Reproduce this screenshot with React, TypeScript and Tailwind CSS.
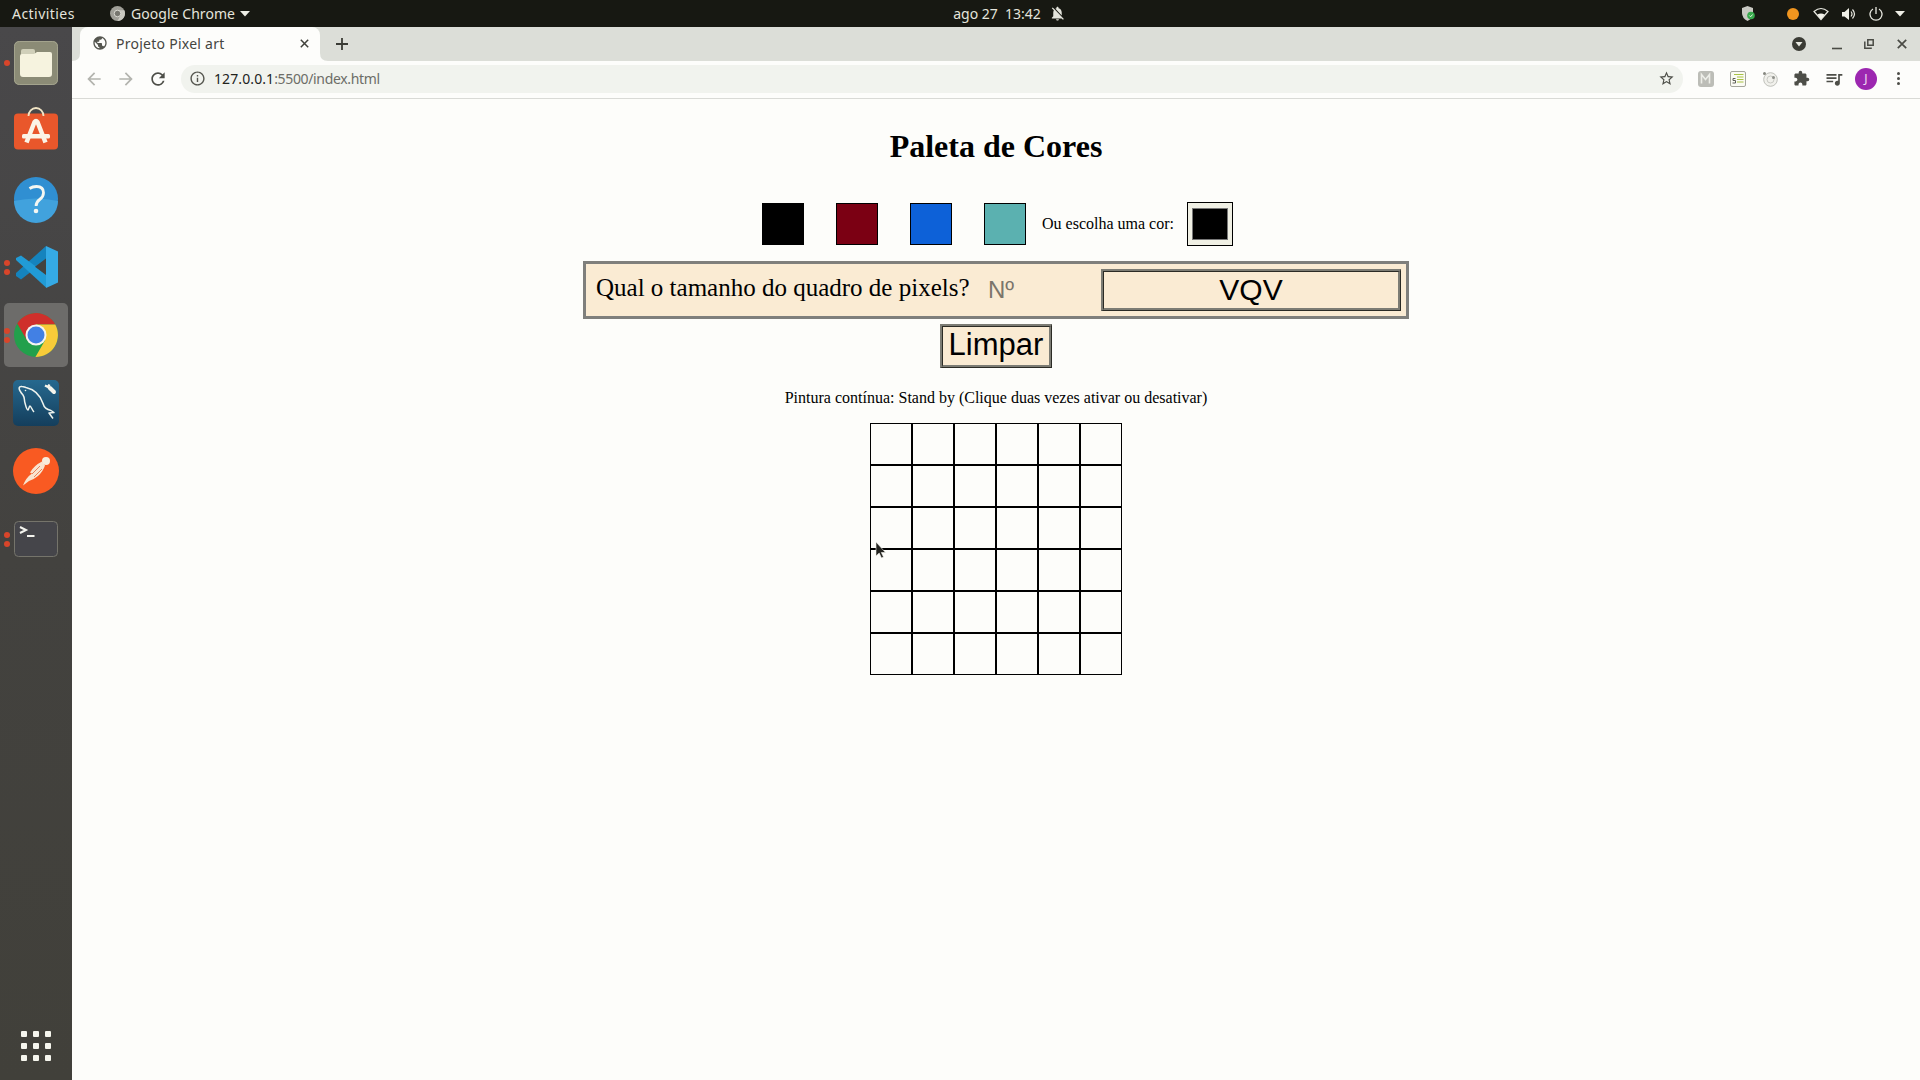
import React from "react";
import { MdExtension, MdQueueMusic, MdStarBorder, MdRefresh, MdArrowBack, MdArrowForward, MdInfoOutline, MdPublic, MdNotificationsOff } from "react-icons/md";

function Dots({ n }: { n: number }) {
  return (
    <span className="flex w-[14px] shrink-0 flex-col items-center gap-[3px]">
      {Array.from({ length: n }, (_, i) => (
        <span key={i} className="size-[6px] rounded-full bg-[#d8452a]" />
      ))}
    </span>
  );
}

function DockItem({ dots = 0, active = false, children }: { dots?: number; active?: boolean; children: React.ReactNode }) {
  return (
    <div className={active ? "flex h-16 w-[72px] items-center px-1 [&>div]:bg-[#6d6c6a]" : "flex h-16 w-[72px] items-center px-1"}>
      <div className="flex h-16 w-16 items-center rounded-[5px]">
        <span className="-ml-[4px] flex w-[14px]">{dots > 0 && <Dots n={dots} />}</span>
        <span className="flex">{children}</span>
      </div>
    </div>
  );
}

const svg = { width: 44, height: 44, viewBox: "0 0 44 44", overflow: "visible" } as const;

function FilesIcon() {
  return (
    <svg {...svg}>
      <rect x="0" y="0" width="44" height="44" rx="5" fill="#8b8b76" />
      <rect x="0.5" y="0.5" width="43" height="43" rx="5" fill="none" stroke="#a3a38d" />
      <path d="M7 12V10q0-2 2-2h10q2 0 2 2v4H7z" fill="#d0cfb9" />
      <path d="M6 15q0-2 2-2h12l3-2h13q2 0 2 2v20q0 3-3 3H9q-3 0-3-3z" fill="#f6f3df" />
    </svg>
  );
}

function SoftwareIcon() {
  return (
    <svg {...svg}>
      <rect x="0" y="4.500" width="44" height="36" rx="4" fill="#e9572b" />
      <path d="M14.500 7a7.500 8 0 0 1 15 0" fill="none" stroke="#f1e4c4" strokeWidth="1.800" />
      <path d="M12.500 33.500L20.500 13q1.500-2 3 0l8 20.500" fill="none" stroke="#fbf4e6" strokeWidth="4.500" />
      <rect x="8" y="25" width="28" height="4.500" rx="1.500" fill="#fbf4e6" />
    </svg>
  );
}

function HelpIcon() {
  return (
    <svg {...svg}>
      <circle cx="22" cy="22" r="22" fill="#308fd2" />
      <path d="M0 24a22 22 0 0 0 44 0q-22-5-44 0z" fill="#41a2dd" />
      <path d="M15.5 11.5q3-2 7-2 7 0 7 6.2 0 4-3.8 6.8-3.6 2.6-3.6 6.5" fill="none" stroke="#f5f7f2" strokeWidth="2.8" />
      <circle cx="22" cy="34" r="2.3" fill="#f5f7f2" />
    </svg>
  );
}

function CodeIcon() {
  return (
    <svg {...svg}>
      <path d="M2 28L32 1v14L7 34.500L2 31z" fill="#1583bd" />
      <path d="M7 10.500L32 29v13.500L2 15v-2z" fill="#219bd6" />
      <path d="M32 1l12 5.500v31L32 43z" fill="#35aae5" />
      <path d="M32 13.500V30L21 21.800z" fill="#43423f" />
    </svg>
  );
}

function ChromeIcon() {
  return (
    <svg width="44" height="44" viewBox="2 2 44 44">
      <circle cx="24" cy="24" r="22" fill="#22a04c" />
      <path d="M5.250 12.530A22 22 0 0 1 43.300 13.500H24L14.900 29.250z" fill="#cf2f2b" />
      <path d="M43.300 13.500A22 22 0 0 1 23.440 45.970L33.100 29.250 24 13.500z" fill="#f8cb39" />
      <circle cx="24" cy="24" r="10.500" fill="#f5f5f0" />
      <circle cx="24" cy="24" r="8.500" fill="#4280e4" />
    </svg>
  );
}

function MysqlIcon() {
  return (
    <svg {...svg}>
      <defs>
        <linearGradient id="sea" x1="0" x2="0" y1="0" y2="1">
          <stop offset="0" stopColor="#26698f" />
          <stop offset="1" stopColor="#143e5c" />
        </linearGradient>
      </defs>
      <rect x="-1" y="-1" width="46" height="46" rx="5" fill="url(#sea)" />
      <path d="M9 14C4 8 4 5 8 5.500c2 0 2 .5 4 1 9 2 14 7 17 16 1 4 3 6 8 7l3 2-5 .5 4 5.500M9 14c2 3 1 5 2 8 1 4 2 7 3 7 1-1 1-4 2-4s2 4 4 6" fill="none" stroke="#eef3ee" strokeWidth="1.500" strokeLinejoin="round" />
      <circle cx="11.500" cy="9.500" r="0.800" fill="#eef3ee" />
      <path d="M36 7l4 4" stroke="#f5f5ec" strokeWidth="4" strokeLinecap="round" />
      <path d="M31 4.500l3 1.500 1.500-2.500M34 6l3 3" fill="none" stroke="#f5f5ec" strokeWidth="2.400" />
    </svg>
  );
}

function PostmanIcon() {
  return (
    <svg {...svg}>
      <circle cx="22" cy="22" r="23" fill="#f95a22" />
      <circle cx="32" cy="12" r="4" fill="#f8ecdc" />
      <path d="M28 12.500l3 4q-2 6-7 10.500-5 4-9 5l-6 4.500q3-8 9-12l-2-1q4-7 12-11z" fill="#f8e4d0" />
      <path d="M26 17l-8 8M28 20l-8 8" stroke="#e5693c" strokeWidth=".8" />
    </svg>
  );
}

function TerminalIcon() {
  return (
    <svg {...svg}>
      <rect x="0.500" y="4.500" width="43" height="35" rx="4" fill="#45454a" stroke="#75746b" />
      <path d="M6 10l6 3-6 3" fill="none" stroke="#f4f4ee" strokeWidth="2" />
      <path d="M13 19h7.500" stroke="#f4f4ee" strokeWidth="2" />
    </svg>
  );
}

function Dock() {
  return (
    <aside className="flex w-[72px] shrink-0 flex-col justify-between bg-gradient-to-b from-[#49484a] via-[#43423f] to-[#41403a] pt-1">
      <div className="flex flex-col gap-1">
        <DockItem dots={1}><FilesIcon /></DockItem>
        <DockItem><SoftwareIcon /></DockItem>
        <DockItem><HelpIcon /></DockItem>
        <DockItem dots={2}><CodeIcon /></DockItem>
        <DockItem dots={2} active><ChromeIcon /></DockItem>
        <DockItem><MysqlIcon /></DockItem>
        <DockItem><PostmanIcon /></DockItem>
        <DockItem dots={2}><TerminalIcon /></DockItem>
      </div>
      <div className="mb-[19px] ml-[21px] grid w-[30px] grid-cols-3 gap-[6px]">
        {Array.from({ length: 9 }, (_, i) => (
          <span key={i} className="size-[6px] rounded-[1px] bg-[#f6f6ee]" />
        ))}
      </div>
    </aside>
  );
}

function TopBar() {
  return (
    <header className="grid h-[27px] shrink-0 grid-cols-3 items-center bg-[#171812] text-[14px] text-[#e4e4dc]">
      <div className="flex items-center pl-3">
        <span className="w-[98px] tracking-[0.45px]">Activities</span>
        <svg width="15" height="15" viewBox="0 0 16 16" className="mr-[6px]">
          <circle cx="8" cy="8" r="8" fill="#a09f98" />
          <path d="M8 4.500h7.200A8 8 0 0 1 8 16l3.200-6z" fill="#c9c8c0" />
          <circle cx="8" cy="8" r="3.500" fill="#77766f" stroke="#deddd5" />
        </svg>
        <span className="tracking-[0.05px]">Google Chrome</span>
        <svg width="10" height="6" viewBox="0 0 10 6" className="ml-[5px]"><path d="M0 0h10L5 5.500z" fill="#eeeee6" /></svg>
      </div>
      <div className="flex items-center justify-center pl-[99px]">
        <span className="whitespace-pre">ago 27  13:42</span>
        <MdNotificationsOff className="ml-2 size-[17px]" />
      </div>
      <div className="flex items-center justify-end pr-[15px]">
        <svg width="15" height="16" viewBox="0 0 15 16" className="mr-[31px]">
          <path d="M6.500 0L12 2v5q0 5-5.500 8Q1 12 1 7V2z" fill="#c9c9c3" />
          <circle cx="10" cy="9.500" r="3.800" fill="#37a94c" />
          <path d="M8.300 9.500l1.300 1.300 2-2.300" stroke="#e8f5e8" fill="none" />
        </svg>
        <span className="mr-[14px] size-3 rounded-full bg-[#f0951f]" />
        <svg width="16" height="14" viewBox="0 0 16 14" className="mr-3">
          <path d="M1 4.500q7-6 14 0L8 12.500z" fill="none" stroke="#e9e9e1" strokeWidth="1.200" />
          <path d="M4.300 7.500q3.700-2 7.400 0L8 12.500z" fill="#f2f2ea" />
        </svg>
        <svg width="16" height="14" viewBox="0 0 16 14" className="mr-[12px]">
          <path d="M1 5h2.500L8 1v12L3.500 9.500H1z" fill="#f0f0e8" />
          <path d="M10 4.500q2 2.500 0 5M11.500 2.500q4 4.500 0 9" fill="none" stroke="#e9e9e1" strokeWidth="1.200" />
        </svg>
        <svg width="14" height="14" viewBox="0 0 14 14" className="mr-[12px]">
          <path d="M4 2A6 6 0 1 0 10 2M7 0v7" fill="none" stroke="#e9e9e1" strokeWidth="1.300" />
        </svg>
        <svg width="10" height="6" viewBox="0 0 10 6"><path d="M0 0h10L5 5.500z" fill="#eeeee6" /></svg>
      </div>
    </header>
  );
}

function TabStrip() {
  return (
    <div className="flex h-[34px] shrink-0 items-end bg-[#dcded8] text-[#45453f]">
      <svg width="8" height="8" viewBox="0 0 8 8"><path d="M8 0v8H0Q8 8 8 0z" fill="#fdfdfb" /></svg>
      <div className="flex h-[34px] w-[240px] items-center rounded-t-[8px] bg-[#fdfdfb] pr-[11px] pb-[2px] pl-[12px]">
        <MdPublic className="size-4 text-[#55564f]" />
        <span className="ml-2 grow text-[14px] tracking-[0.26px]">Projeto Pixel art</span>
        <svg width="9" height="9" viewBox="0 0 9 9"><path d="M.8.800l7.400 7.400M8.200.8L.8 8.200" stroke="#40413b" strokeWidth="1.500" /></svg>
      </div>
      <svg width="8" height="8" viewBox="0 0 8 8"><path d="M0 0v8h8Q0 8 0 0z" fill="#fdfdfb" /></svg>
      <div className="flex h-[34px] grow items-center justify-between pr-[13px] pl-2">
        <svg width="12" height="12" viewBox="0 0 12 12"><path d="M6 0v12M0 6h12" stroke="#3a3b35" strokeWidth="1.800" /></svg>
        <div className="flex items-center">
          <svg width="14" height="14" viewBox="0 0 14 14" className="mr-[26px]"><circle cx="7" cy="7" r="7" fill="#3b3c35" /><path d="M3.500 5h7L7 9.500z" fill="#e9eae2" /></svg>
          <svg width="10" height="12" viewBox="0 0 10 12" className="mr-[22px]"><path d="M0 10.500h10" stroke="#4a4b45" strokeWidth="1.600" /></svg>
          <svg width="10" height="10" viewBox="0 0 10 10" className="mr-[23px]"><path d="M3.800.8h5.400v5.400H3.800zM.8 2.500v6.700h7" fill="none" stroke="#4a4b45" strokeWidth="1.500" /></svg>
          <svg width="10" height="10" viewBox="0 0 10 10"><path d="M.8.800l8.400 8.400M9.200.8L.8 9.200" stroke="#4a4b45" strokeWidth="1.700" /></svg>
        </div>
      </div>
    </div>
  );
}

function Toolbar() {
  return (
    <div className="flex h-[38px] shrink-0 items-center border-b border-[#d9dad6] bg-[#fdfdfb] pb-[2px]">
      <div className="flex w-[109px] items-center gap-[12px] pl-[12px]">
        <MdArrowBack className="size-5 text-[#b3b4ae]" />
        <MdArrowForward className="size-5 text-[#b3b4ae]" />
        <MdRefresh className="size-5 text-[#4d4e48]" />
      </div>
      <div className="flex h-7 w-[1502px] items-center rounded-full bg-[#f1f3ee] pr-[8px] pl-2">
        <MdInfoOutline className="size-[17px] text-[#55564f]" />
        <span className="ml-[8px] grow text-[14px] tracking-[-0.35px] text-[#6c6d67]"><span className="tracking-[0.1px] text-[#22231d]">127.0.0.1</span>:5500/index.html</span>
        <MdStarBorder className="size-[17px] text-[#4d4e48]" />
      </div>
      <div className="flex grow items-center justify-end pr-[20px]">
        <svg width="16" height="16" viewBox="0 0 16 16" className="mr-4">
          <rect width="16" height="16" rx="3" fill="#bcbdb7" />
          <path d="M3.500 12.500v-9l4 5 4-5v9" fill="none" stroke="#edeee8" strokeWidth="1.600" />
        </svg>
        <svg width="16" height="16" viewBox="0 0 16 16" className="mr-4">
          <rect x=".5" y=".5" width="15" height="15" rx="1.500" fill="#fbfbf4" stroke="#a5a69c" />
          <path d="M4 3.500h9.500M7 6h6.500M7 8.500h6.500M7 11h6.500" stroke="#a9c344" strokeWidth="1.200" />
          <path d="M5.500 7.500H3v2h2.500v2.500H2.500" fill="none" stroke="#5e5f58" strokeWidth="1" />
        </svg>
        <svg width="16" height="16" viewBox="0 0 16 16" className="mr-[15px]">
          <circle cx="8.500" cy="8.500" r="6.800" fill="#f1f1ec" stroke="#bfc0ba" />
          <circle cx="8.500" cy="8.500" r="3.500" fill="none" stroke="#c9cac4" />
          <circle cx="2.500" cy="2.500" r="1.500" fill="#86877f" />
          <circle cx="11.500" cy="6.500" r="1.500" fill="#8f908a" />
        </svg>
        <MdExtension className="mr-[14px] size-[17px] text-[#4d4e48]" />
        <MdQueueMusic className="mr-[11px] size-[20px] text-[#4d4e48]" />
        <span className="flex size-[22px] items-center justify-center rounded-full bg-[#9c27b0] text-[12px] text-[#f0dff2]">J</span>
        <span className="ml-[20px] flex flex-col gap-[2px]">
          <span className="size-[3px] rounded-full bg-[#4d4e48]" />
          <span className="size-[3px] rounded-full bg-[#4d4e48]" />
          <span className="size-[3px] rounded-full bg-[#4d4e48]" />
        </span>
      </div>
    </div>
  );
}

function RidgeButton({ className, children }: { className: string; children: React.ReactNode }) {
  return (
    <button className="flex border-t-2 border-r border-b border-l-2 border-t-[#7c7c74] border-r-[#2b2b25] border-b-[#2b2b25] border-l-[#7c7c74] bg-[#faebd3] font-['Liberation_Sans',sans-serif]">
      <span className={`flex justify-center border-t border-r-2 border-b-2 border-l border-t-[#2b2b25] border-r-[#7c7c74] border-b-[#7c7c74] border-l-[#2b2b25] ${className}`}>
        {children}
      </span>
    </button>
  );
}

function Page() {
  return (
    <main className="flex grow flex-col items-center bg-[#fdfdfa] font-['Liberation_Serif',serif] text-black">
      <h1 className="mt-[29px] text-[32px] leading-[37px] font-bold">Paleta de Cores</h1>
      <div className="mt-[37px] flex h-[44px] items-center pl-[3px]">
        <div className="flex gap-8">
          <div className="size-[42px] border border-black bg-black" />
          <div className="size-[42px] border border-black bg-[#7b0013]" />
          <div className="size-[42px] border border-black bg-[#0d61d8]" />
          <div className="size-[42px] border border-black bg-[#5bb1b0]" />
        </div>
        <span className="ml-[16px] w-[145px] text-[16px]">Ou escolha uma cor:</span>
        <div className="h-[44px] w-[46px] border border-black bg-[#f0f0e4] px-[4px] py-[5px]">
          <div className="h-full w-full border border-[#777] bg-black" />
        </div>
      </div>
      <div className="mt-[15px] flex h-[58px] w-[826px] items-center border-[3px] border-[#7f7f7c] bg-[#faebd3] pr-[5px] pl-[10px]">
        <span className="mb-[5px] w-[392px] text-[25px] whitespace-nowrap">Qual o tamanho do quadro de pixels?</span>
        <span className="grow font-['Liberation_Sans',sans-serif] text-[24px] text-[#7b756b]">Nº</span>
        <RidgeButton className="h-[39px] w-[297px] text-[30px] leading-[36px]">VQV</RidgeButton>
      </div>
      <div className="mt-[5px] flex">
        <RidgeButton className="h-[41px] w-[109px] text-[31px] leading-[36px]">Limpar</RidgeButton>
      </div>
      <p className="mt-[21px] text-[16px] leading-[18px]">Pintura contínua: Stand by (Clique duas vezes ativar ou desativar)</p>
      <div className="relative mt-[16px] grid grid-cols-[repeat(6,42px)]">
        {Array.from({ length: 36 }, (_, i) => (
          <div key={i} className="size-[42px] border border-black" />
        ))}
        <svg width="12" height="20" viewBox="0 0 12 20" className="absolute top-[118px] left-[5px]">
          <path d="M1 1v14l3.200-3L6.500 17l2-1-2.200-4.500H10.500z" fill="#23231f" stroke="#f5f5ee" strokeWidth=".6" />
        </svg>
      </div>
    </main>
  );
}

export default function App() {
  return (
    <div className="flex h-[1080px] w-[1920px] flex-col overflow-hidden font-['Noto_Sans',sans-serif]">
      <TopBar />
      <div className="flex min-h-0 grow">
        <Dock />
        <div className="flex grow flex-col">
          <TabStrip />
          <Toolbar />
          <Page />
        </div>
      </div>
    </div>
  );
}
